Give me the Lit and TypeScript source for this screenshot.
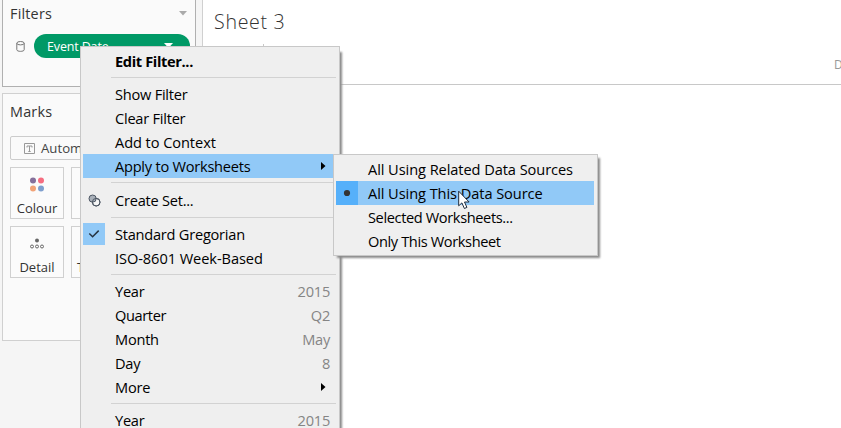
import { LitElement, html, svg, css, nothing } from "lit";
import { customElement, property } from "lit/decorators.js";
import { classMap } from "lit/directives/class-map.js";

interface Row {
  label?: string;
  value?: string;
  kind?: "bold" | "sep" | "sep-tall" | "sep-low";
  fit?: "wide" | "tight";
  active?: boolean;
  arrow?: boolean;
  icon?: "set" | "check" | "radio";
}

const FILTER_MENU: Row[] = [
  { label: "Edit Filter...", kind: "bold" },
  { kind: "sep" },
  { label: "Show Filter" },
  { label: "Clear Filter" },
  { label: "Add to Context", fit: "wide" },
  { label: "Apply to Worksheets", arrow: true, active: true },
  { kind: "sep-tall" },
  { label: "Create Set...", icon: "set" },
  { kind: "sep-low" },
  { label: "Standard Gregorian", icon: "check" },
  { label: "ISO-8601 Week-Based", fit: "wide" },
  { kind: "sep" },
  { label: "Year", value: "2015" },
  { label: "Quarter", value: "Q2", fit: "tight" },
  { label: "Month", value: "May" },
  { label: "Day", value: "8" },
  { label: "More", arrow: true },
  { kind: "sep" },
  { label: "Year", value: "2015" },
];

const WORKSHEET_MENU: Row[] = [
  { label: "All Using Related Data Sources", fit: "wide" },
  { label: "All Using This Data Source", icon: "radio", active: true, fit: "wide" },
  { label: "Selected Worksheets...", fit: "tight" },
  { label: "Only This Worksheet", fit: "tight" },
];

@customElement("context-menu")
class ContextMenu extends LitElement {
  @property({ attribute: false }) rows: Row[] = [];

  static styles = css`
    :host {
      display: block;
      box-sizing: border-box;
      background: #efefef;
      border: 1px solid #c8c8c8;
      padding: 2px 3px 2px 2px;
      font: 14.6px/24px "Open Sans", "Noto Sans", sans-serif;
      letter-spacing: -0.24px;
      color: #000;
      white-space: nowrap;
    }
    .row { display: flex; height: 24px; align-items: center; }
    .bold { font-weight: 700; letter-spacing: -0.36px; }
    .wide { letter-spacing: -0.07px; }
    .tight { letter-spacing: -0.38px; }
    .active { background: #91c9f7; }
    .gutter { width: 22px; height: 22px; margin-right: 10px; flex: none; display: flex; align-items: center; justify-content: center; }
    .check { background: #91c9f7; }
    .radio { background: #56b0fa; height: 24px; }
    .label { flex: 1; }
    .value { color: #858585; padding-right: 6px; letter-spacing: -0.24px; }
    .arrow { margin-right: 10px; }
    .sep { height: 9px; padding: 4px 0 0 28px; box-sizing: border-box; }
    .tall { height: 10px; }
    .low { height: 10px; padding-top: 5px; }
    .line { height: 1px; background: #d2d2d2; }
    svg { display: block; }
  `;

  private icon(name?: Row["icon"]) {
    if (name === "set")
      return html`<svg width="13" height="13" viewBox="0 0 13 13" fill="none" stroke="#4d5663"><circle cx="8.2" cy="8.2" r="3.8" fill="#f6f6f6"/><circle cx="4.6" cy="4.6" r="3.6" fill="#a9b0b9"/><circle cx="8.2" cy="8.2" r="3.8"/></svg>`;
    if (name === "check")
      return html`<svg width="12" height="10" viewBox="0 0 12 10" fill="none" stroke="#263442" stroke-width="1.5"><path d="M1.3 4.5 4.6 7.7 10.7 1.6"/></svg>`;
    if (name === "radio")
      return html`<svg width="8" height="8" viewBox="0 0 8 8"><circle cx="4" cy="4" r="3.1" fill="#333"/></svg>`;
    return nothing;
  }

  render() {
    return this.rows.map((r) =>
      r.kind?.startsWith("sep")
        ? html`<div class=${classMap({ sep: true, tall: r.kind === "sep-tall", low: r.kind === "sep-low" })}><div class="line"></div></div>`
        : html`<div class=${classMap({ row: true, bold: r.kind === "bold", wide: r.fit === "wide", tight: r.fit === "tight", active: !!r.active })}>
            <span class=${classMap({ gutter: true, check: r.icon === "check", radio: r.icon === "radio" })}>${this.icon(r.icon)}</span>
            <span class="label">${r.label}</span>
            ${r.value ? html`<span class="value">${r.value}</span>` : nothing}
            ${r.arrow ? html`<svg class="arrow" width="5" height="8" viewBox="0 0 5 8"><path d="M0 0 4.5 4 0 8z"/></svg>` : nothing}
          </div>`
    );
  }
}

@customElement("app-root")
class AppRoot extends LitElement {
  static styles = css`
    :host {
      display: flex;
      position: relative;
      width: 841px;
      height: 428px;
      overflow: hidden;
      background: #fff;
      font-family: "Open Sans", "Noto Sans", sans-serif;
      color: #333;
    }
    svg { display: block; }
    .side { width: 203px; box-sizing: border-box; flex: none; background: #f5f5f5; border-right: 1px solid #d0d0d0; padding-left: 2px; }
    .card { width: 194px; box-sizing: border-box; border: 1px solid #d0d0d0; background: #fafafa; }
    .filters { height: 87px; border-color: #b0b0b0; border-top: 0; }
    .marks { height: 248px; margin-top: 6px; }
    .head { display: flex; align-items: center; justify-content: space-between; font-size: 14.4px; height: 26px; padding: 0 8px 0 7px; letter-spacing: .2px; }
    .marks .head { height: 34px; }
    .field { display: flex; align-items: center; margin-top: 8px; padding-left: 13px; }
    .pill { display: flex; align-items: center; justify-content: space-between; box-sizing: border-box; width: 156px; height: 24px; margin-left: 9px; padding: 0 17px 0 13px; border-radius: 12px; background: #009966; color: #fff; font-size: 12.5px; letter-spacing: -.15px; }
    .select { display: flex; align-items: center; box-sizing: border-box; width: 172px; height: 24px; margin: 8px 0 7px 7px; padding-left: 13px; border: 1px solid #ccc; border-radius: 2px; background: #fafafa; font-size: 13.2px; gap: 6px; color: #444; }
    .tiles { display: grid; grid-template-columns: repeat(3, 54px); gap: 7px; margin-left: 7px; }
    .tile { height: 52px; box-sizing: border-box; border: 1px solid #d0d0d0; background: #fbfbfb; display: flex; flex-direction: column; align-items: center; justify-content: space-between; padding: 9px 0 0; font-size: 13px; line-height: 19px; }
    .main { flex: 1; min-width: 0; }
    .top { height: 84px; border-bottom: 1px solid #c8c8c8; box-sizing: content-box; }
    .title { height: 44px; box-sizing: border-box; padding-left: 11px; line-height: 43px; font-size: 19.6px; font-weight: 300; letter-spacing: .7px; }
    .axis { display: flex; justify-content: space-between; height: 40px; padding-left: 60px; }
    .tick { width: 1px; height: 8px; background: #c8c8c8; }
    .clip { width: 7px; overflow: hidden; font-size: 12px; line-height: 41px; color: #999; }
    .menu { position: absolute; left: 80px; top: 46px; width: 260px; height: 400px; box-shadow: 3px 5px 2px -1px #8b8b8b; }
    .sub { position: absolute; left: 333px; top: 154px; width: 265px; height: 102px; box-shadow: 3px 3px 2px -1px #8b8b8b; }
    .cursor { position: absolute; left: 458px; top: 190px; }
  `;

  private tile(label: string, art: unknown) {
    return html`<div class="tile"><svg width="16" height="16" viewBox="0 0 16 16">${art}</svg>${label}</div>`;
  }

  render() {
    return html`
      <aside class="side">
        <section class="card filters">
          <div class="head">Filters<svg width="8" height="5" viewBox="0 0 8 5"><path d="M0 0h8L4 4.5z" fill="#aaa"/></svg></div>
          <div class="field">
            <svg width="9" height="11" viewBox="0 0 9 11" fill="none" stroke="#777"><ellipse cx="4.5" cy="2.2" rx="3.7" ry="1.7"/><path d="M.8 2.2v6.5c0 2.2 7.4 2.2 7.4 0V2.2"/></svg>
            <div class="pill">Event Date<svg width="9" height="6" viewBox="0 0 9 6"><path d="M0 0h9L4.5 5z" fill="#fff"/></svg></div>
          </div>
        </section>
        <section class="card marks">
          <div class="head">Marks</div>
          <div class="select"><svg width="11" height="11" viewBox="0 0 11 11" fill="none" stroke="#999"><path d="M.5.5h10v10H.5zM3 4.5V3h5v1.5M5.5 3v5.5M4.3 8.5h2.4"/></svg>Automatic</div>
          <div class="tiles">
            ${this.tile("Colour", svg`<circle cx="4" cy="3.5" r="3" fill="#85709b"/><circle cx="12" cy="3.5" r="3" fill="#f66d80"/><circle cx="4" cy="11.5" r="3" fill="#f2a377"/><circle cx="12" cy="11.5" r="3" fill="#7e9fce"/>`)}
            ${this.tile("Size", nothing)}
            ${this.tile("Label", nothing)}
            ${this.tile("Detail", svg`<circle cx="8" cy="4.5" r="2" fill="#666"/><g fill="none" stroke="#666"><circle cx="3" cy="10.5" r="1.5"/><circle cx="8" cy="10.5" r="1.5"/><circle cx="13" cy="10.5" r="1.5"/></g>`)}
            ${this.tile("Tooltip", nothing)}
          </div>
        </section>
      </aside>
      <main class="main">
        <div class="top">
          <div class="title">Sheet 3</div>
          <div class="axis"><div class="tick"></div><div class="clip">Day</div></div>
        </div>
      </main>
      <context-menu class="menu" .rows=${FILTER_MENU}></context-menu>
      <context-menu class="sub" .rows=${WORKSHEET_MENU}></context-menu>
      <svg class="cursor" width="12" height="20" viewBox="0 0 12 20"><path d="M.7 1.2v14.6l3.2-2.9 2.5 5.6 2.5-1.1-2.4-5.4h4.6z" fill="#fff" stroke="#1f2b3a"/></svg>
    `;
  }
}
